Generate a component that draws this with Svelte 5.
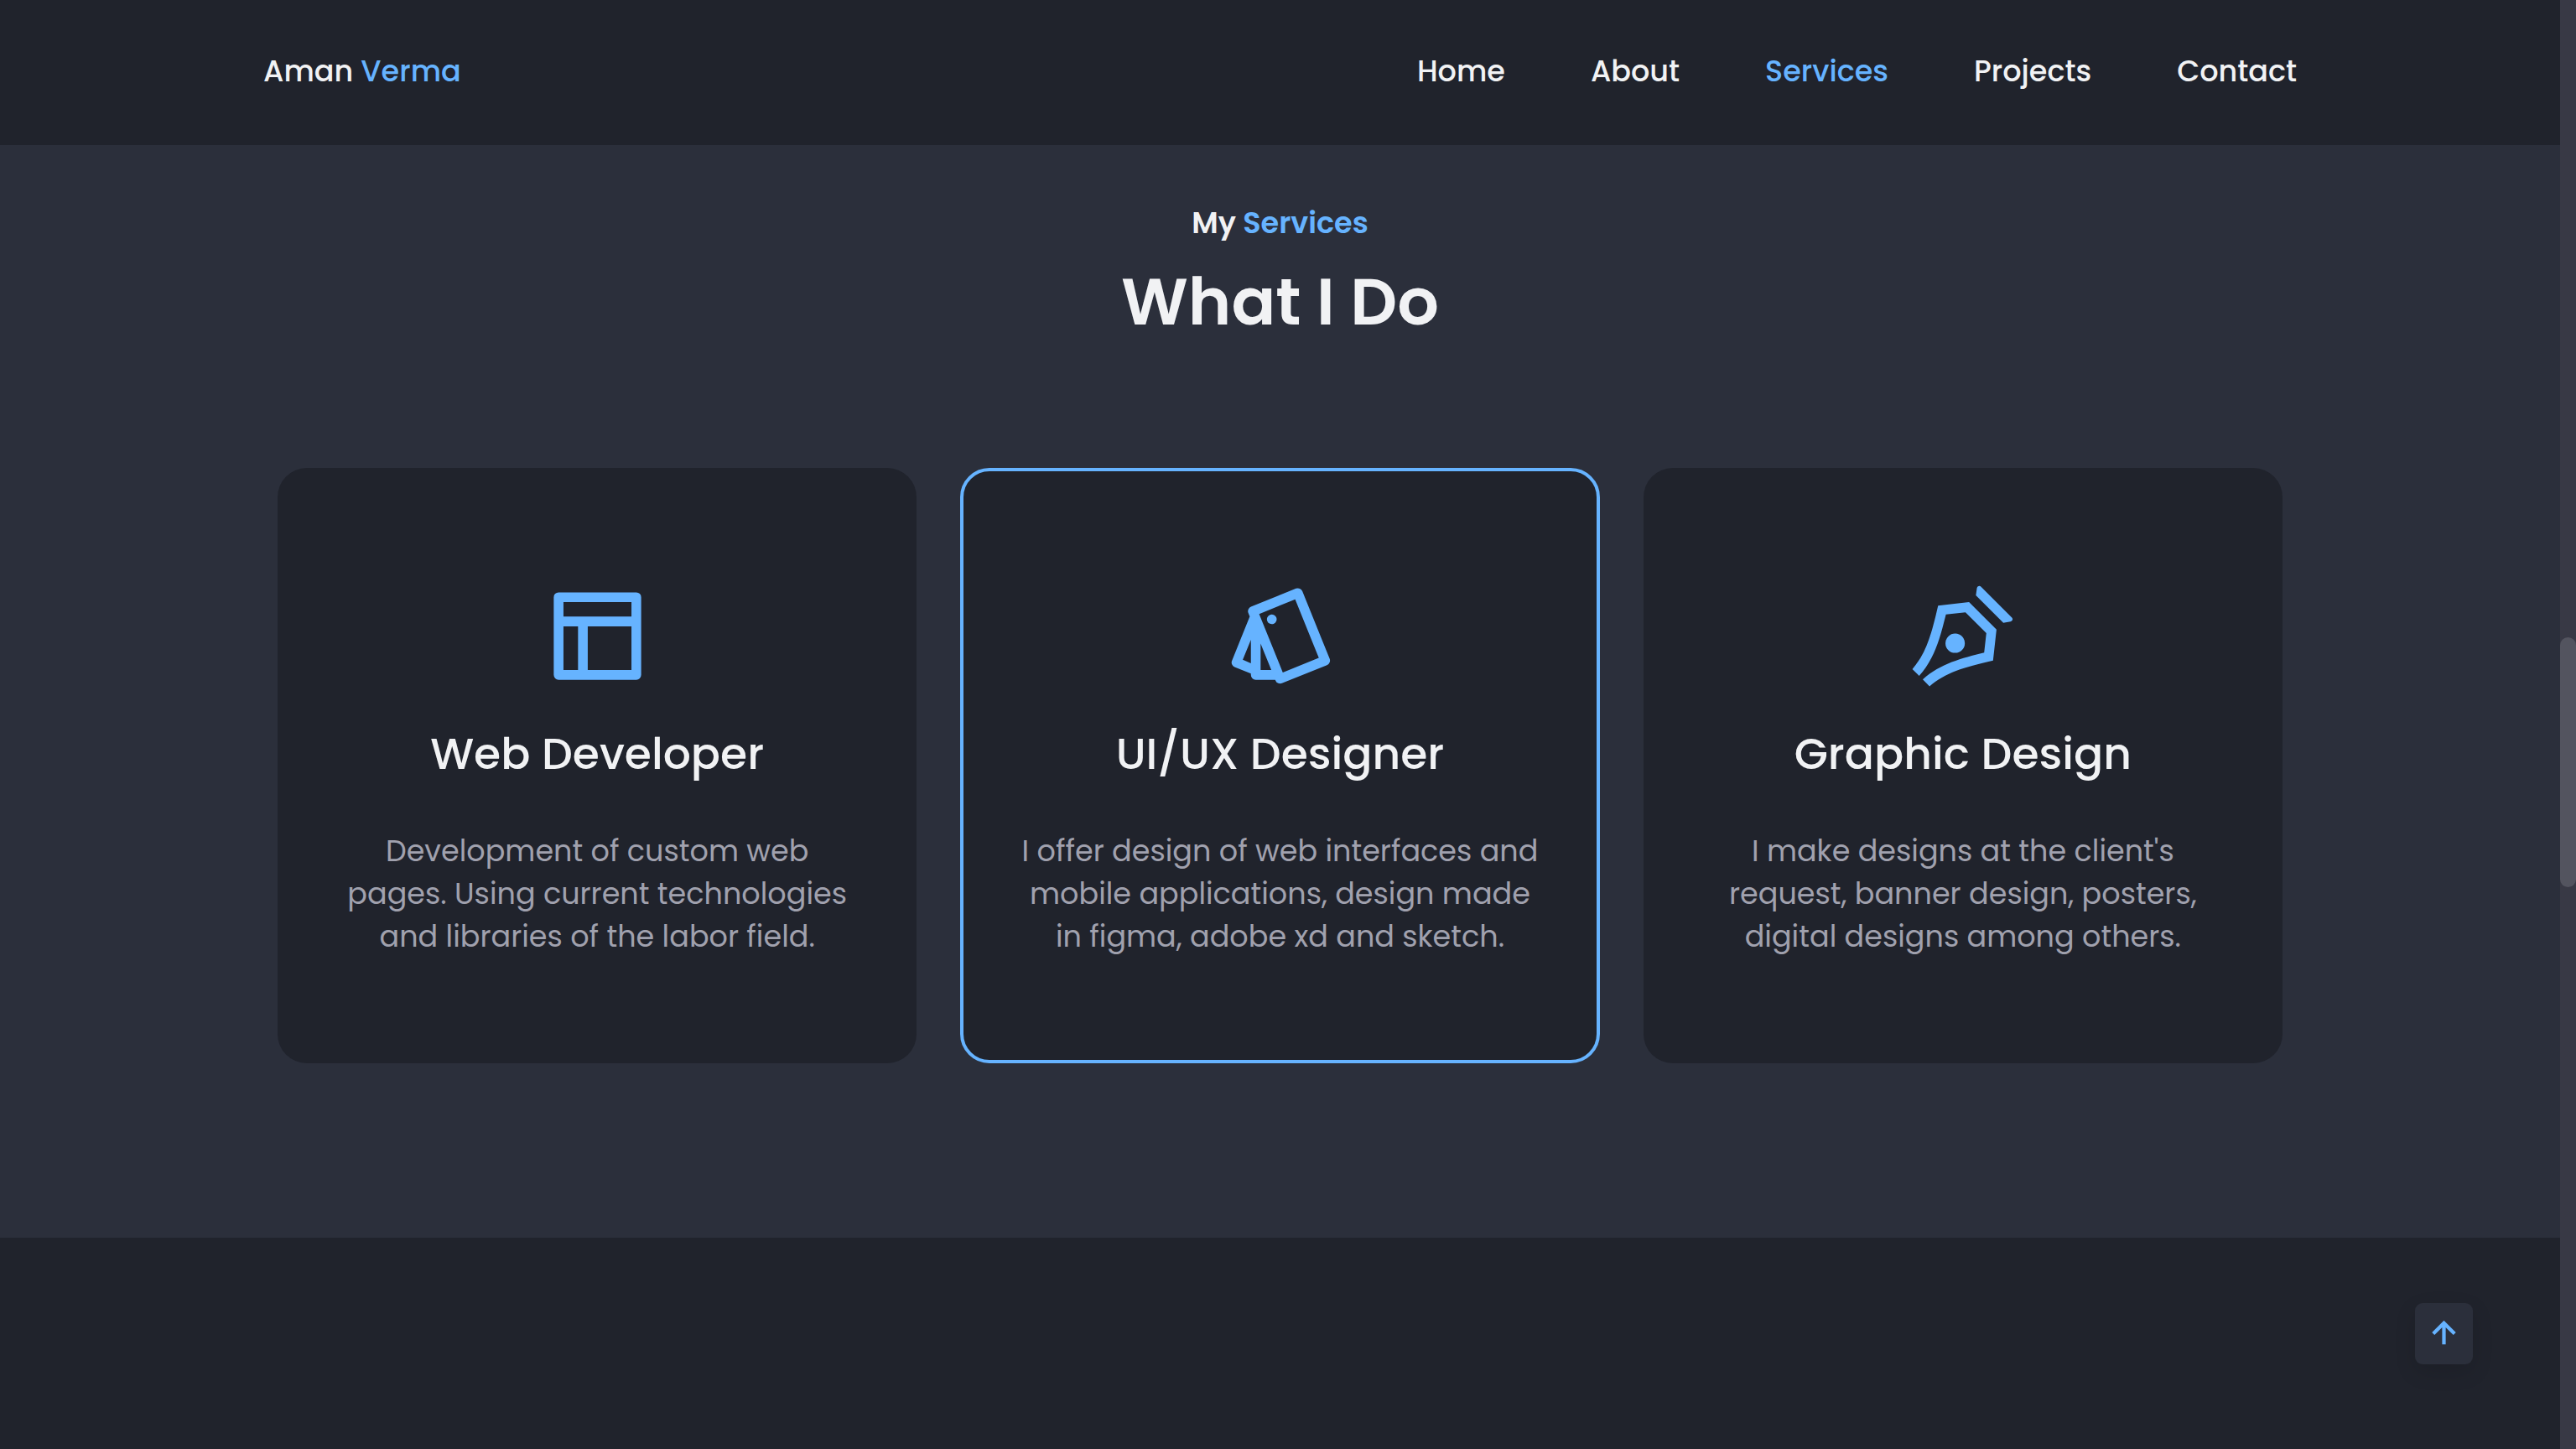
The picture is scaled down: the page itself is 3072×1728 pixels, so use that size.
<script>
  const links = ['Home', 'About', 'Services', 'Projects', 'Contact'];
  let active = $state('Services');

  const services = [
    {
      title: 'Web Developer',
      text: 'Development of custom web pages. Using current technologies and libraries of the labor field.',
      viewBox: '0 0 24 24',
      icon: 'M4 21a1 1 0 0 1-1-1V4a1 1 0 0 1 1-1h16a1 1 0 0 1 1 1v16a1 1 0 0 1-1 1H4zm4-11H5v9h3v-9zm11 0h-9v9h9v-9zm0-5H5v3h14V5z'
    },
    {
      title: 'UI/UX Designer',
      text: 'I offer design of web interfaces and mobile applications, design made in figma, adobe xd and sketch.',
      viewBox: '0 0 24 24',
      highlighted: true,
      icon: 'M5.764 8l-.295-.73a1 1 0 0 1 .553-1.302l9.272-3.746a1 1 0 0 1 1.301.552l5.62 13.908a1 1 0 0 1-.553 1.302L12.39 21.73a1 1 0 0 1-1.302-.553L11 21H7a1 1 0 0 1-1-1v-.27l-3.35-1.353a1 1 0 0 1-.552-1.302L5.764 8zM8 19h2.209L8 13.533V19zm-2-6.244l-1.673 4.141L6 17.608v-4.852zm1.698-5.309l4.87 12.054 7.418-2.997-4.87-12.053-7.418 2.996zm2.978 2.033a1 1 0 1 1-.749-1.855 1 1 0 0 1 .75 1.855z'
    },
    {
      title: 'Graphic Design',
      text: "I make designs at the client's request, banner design, posters, digital designs among others.",
      viewBox: '0.8 -0.8 24 24',
      icon: 'M16.596 1.04l6.347 6.346a.5.5 0 0 1-.277.848l-1.474.23-5.656-5.656.212-1.485a.5.5 0 0 1 .848-.283zM4.595 20.15c3.722-3.331 7.995-4.328 12.643-5.52l.446-4.018-4.297-4.297-4.018.446c-1.192 4.648-2.189 8.92-5.52 12.643L2.454 18.01c2.828-3.3 3.89-6.953 5.303-13.081l6.364-.707 5.657 5.657-.707 6.364c-6.128 1.414-9.782 2.475-13.081 5.303L4.595 20.15zm5.284-6.03a2 2 0 1 1 2.828-2.828A2 2 0 0 1 9.88 14.12z'
    }
  ];
</script>

<div class="window">
  <div class="page">
    <header class="header">
      <nav class="nav">
        <a class="logo" href="#home">Aman <span class="accent">Verma</span></a>
        <ul class="menu">
          {#each links as link}
            <li>
              <a
                class="link"
                class:active={link === active}
                href={'#' + link.toLowerCase()}
                onclick={() => (active = link)}>{link}</a>
            </li>
          {/each}
        </ul>
      </nav>
    </header>

    <main class="services" id="services">
      <p class="eyebrow">My <span class="accent">Services</span></p>
      <h2 class="heading">What I Do</h2>
      <div class="cards">
        {#each services as service}
          <article class="card" class:highlighted={service.highlighted}>
            <svg class="icon" viewBox={service.viewBox} aria-hidden="true">
              <path d={service.icon} />
            </svg>
            <h3 class="title">{service.title}</h3>
            <p class="text">{service.text}</p>
          </article>
        {/each}
      </div>
    </main>

    <a class="scroll-up" href="#home" aria-label="Back to top">
      <svg viewBox="0 0 24 24" aria-hidden="true">
        <path d="M11 8.414V18h2V8.414l4.293 4.293 1.414-1.414L12 4.586l-6.707 6.707 1.414 1.414z" />
      </svg>
    </a>
  </div>

  <div class="track" aria-hidden="true"><div class="thumb"></div></div>
</div>

<style>
  :global(body) {
    margin: 0;
    background: #20232c;
  }

  .window {
    --dark: #20232c;
    --body: #2b2f3b;
    --blue: #66b3ff;
    --title: #f1f2f4;
    --muted: #a0a1ae;
    display: flex;
    min-height: 100vh;
    background: var(--dark);
    color: var(--title);
    font-family: Poppins, Inter, sans-serif;
    font-size: 35px;
    line-height: 51px;
  }

  .page {
    flex: 1;
    min-width: 0;
  }

  a {
    color: inherit;
    text-decoration: none;
  }

  .accent,
  .link.active {
    color: var(--blue);
  }

  .header {
    padding: 59px 48px 63px;
    background: var(--dark);
  }

  .nav {
    display: flex;
    justify-content: space-between;
    max-width: 2425px;
    margin: 0 auto;
    font-weight: 500;
  }

  .menu {
    display: flex;
    gap: 102px;
    margin: 0;
    padding: 0;
    list-style: none;
  }

  .services {
    padding: 67px 48px 208px;
    background: var(--body);
    text-align: center;
  }

  .eyebrow {
    margin: 0 0 15px;
    font-weight: 600;
  }

  .heading {
    margin: 0 0 144px;
    font-size: 78px;
    line-height: 108px;
    font-weight: 600;
  }

  .cards {
    display: grid;
    grid-template-columns: repeat(3, 1fr);
    gap: 52px;
    max-width: 2391px;
    margin: 0 auto;
  }

  .card {
    padding: 127px 66px 122px;
    border: 4px solid transparent;
    border-radius: 35px;
    background: var(--dark);
    background-clip: border-box;
  }

  .card.highlighted {
    border-color: var(--blue);
  }

  .icon {
    display: block;
    width: 139px;
    height: 139px;
    margin: 0 auto 33px;
    fill: var(--blue);
  }

  .title {
    margin: 0 0 52px;
    font-size: 52px;
    line-height: 76px;
    font-weight: 500;
  }

  .text {
    margin: 0;
    color: var(--muted);
  }

  .scroll-up {
    position: fixed;
    right: 123px;
    bottom: 101px;
    display: flex;
    padding: 11px 9px;
    border-radius: 9px;
    background: var(--body);
    box-shadow: 0 9px 26px rgba(0, 0, 0, 0.12);
  }

  .scroll-up svg {
    width: 51px;
    height: 51px;
    fill: var(--blue);
  }

  .track {
    position: relative;
    width: 19px;
    background: #383945;
  }

  .thumb {
    position: absolute;
    top: 44%;
    width: 100%;
    height: 17.2%;
    border-radius: 10px;
    background: #53545f;
  }
</style>
